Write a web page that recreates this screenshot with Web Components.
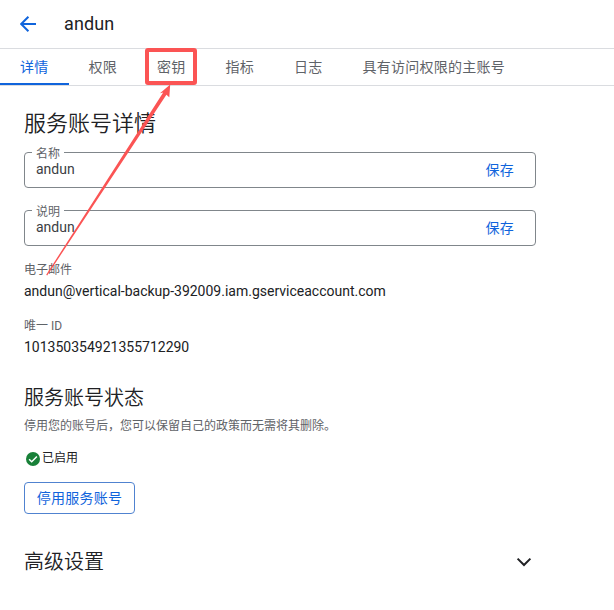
<!DOCTYPE html>
<html lang="zh-CN">
<head>
<meta charset="utf-8">
<title>andun</title>
<style>
html,body{margin:0;background:#fff}
body{width:614px;height:610px;overflow:hidden;position:relative;font-family:Roboto,"Noto Sans CJK SC",sans-serif;color:#202124;--blue:#1064dc}
</style>
</head>
<body>
<account-page></account-page>
<script>
const define = (name, html) => customElements.define(name, class extends HTMLElement {
  constructor() {
    super();
    const t = document.createElement('template');
    t.innerHTML = html;
    this.attachShadow({mode: 'open'}).append(t.content.cloneNode(true));
  }
});

define('page-header', `<style>
:host{display:flex;align-items:center;height:48px;padding-left:20px;gap:28px;border-bottom:1px solid #dadce0;font-size:18px;line-height:24px;letter-spacing:.1px}
svg{width:16px;height:16px;display:block}
</style><svg viewBox="0 0 16 16" fill="none" stroke="#1064dc" stroke-width="2"><path d="M16 8H1.5M8.4 .8L1.2 8l7.2 7.2"/></svg><slot></slot>`);

define('nav-tabs', `<style>
:host{display:flex;height:36px;border-bottom:1px solid #dadce0}
</style><slot></slot>`);

define('nav-tab', `<style>
:host{display:block;box-sizing:border-box;height:36px;padding:0 20px;font-size:14px;line-height:36px;letter-spacing:.25px;color:#5f6368;white-space:nowrap}
:host([active]){color:var(--blue);box-shadow:inset 0 -2px var(--blue)}
</style><slot></slot>`);

define('text-field', `<style>
:host{display:block;width:512px;height:36px}
fieldset{margin:0;min-width:0;box-sizing:border-box;height:43px;margin-top:-7px;padding:0 21px 0 11px;border:1px solid #80868b;border-radius:4px;display:block}
legend{margin-left:-4px;padding:0 4px;height:15px;font-size:12px;line-height:18px;color:#5f6368}
div{display:flex;justify-content:space-between;height:20px;font-size:14px;line-height:20px;margin-top:-1px;color:#3c4043}
b{font-weight:400;color:var(--blue);letter-spacing:.25px;position:relative;top:1px}
</style><fieldset><legend><slot name="label"></slot></legend><div><span><slot></slot></span><b>保存</b></div></fieldset>`);

define('info-row', `<style>
:host{display:block}
p{margin:0;font-size:12px;line-height:18px;height:20px;color:#5f6368}
div{font-size:14px;line-height:20px}
</style><p><slot name="label"></slot></p><div><slot></slot></div>`);

define('status-line', `<style>
:host{display:flex;align-items:center;height:20px;padding-left:2px;gap:2px;font-size:12px;line-height:20px}
svg{width:14px;height:14px;display:block;margin-top:2px}
</style><svg viewBox="0 0 14 14"><circle cx="7" cy="7" r="7" fill="#188038"/><path d="M3.1 7.2l2.6 2.6 5.2-5.3" fill="none" stroke="#fff" stroke-width="1.5"/></svg><span><slot></slot></span>`);

define('outline-button', `<style>
:host{display:block}
button{font:inherit;font-size:14px;line-height:28px;letter-spacing:.25px;box-sizing:border-box;width:111px;height:32px;padding:0;border:1px solid #5083d0;border-radius:4px;background:#fff;color:var(--blue);display:block}
</style><button><slot></slot></button>`);

define('expand-row', `<style>
:host{display:flex;align-items:center;justify-content:space-between;width:508px;height:28px;font-size:20px;line-height:28px;font-weight:350}
svg{width:16px;height:10px;display:block}
</style><span><slot></slot></span><svg viewBox="0 0 16 10" fill="none" stroke="#202124" stroke-width="2"><path d="M1.6 1.6L8 8l6.4-6.4"/></svg>`);

define('annotation-mark', `<style>
:host{position:absolute;left:0;top:0;pointer-events:none}
svg{display:block}
</style><svg width="614" height="610" viewBox="0 0 614 610"><rect x="147" y="50" width="48" height="33" rx="1" fill="none" stroke="#fb5454" stroke-width="4"/><path fill="#fb5454" d="M46.2 274.8L163.2 92.6 160 93.2 170.2 84.5 169.3 97.2 166.4 94.7 47.2 275.4Z"/></svg>`);

define('account-page', `<style>
:host{display:block}
main{display:flex;flex-direction:column;padding:24px 24px 0}
h2,h3,p{margin:0;font-weight:350}
h2{font-size:22px;line-height:28px;height:28px}
h3{font-size:20px;line-height:28px;height:28px;margin-top:26px}
p{font-size:12px;line-height:20px;margin-top:4px;color:#5f6368;font-weight:400}
text-field{margin-top:14px}
text-field+text-field{margin-top:22px}
info-row{height:41px;margin-top:15px}
info-row+info-row{margin-top:15px}
status-line{margin-top:12px}
outline-button{margin-top:14px}
expand-row{margin-top:34px}
</style>
<page-header>andun</page-header>
<nav-tabs><nav-tab active>详情</nav-tab><nav-tab>权限</nav-tab><nav-tab>密钥</nav-tab><nav-tab>指标</nav-tab><nav-tab>日志</nav-tab><nav-tab>具有访问权限的主账号</nav-tab></nav-tabs>
<main>
<h2>服务账号详情</h2>
<text-field><span slot="label">名称</span>andun</text-field>
<text-field><span slot="label">说明</span>andun</text-field>
<info-row><span slot="label">电子邮件</span>andun@vertical-backup-392009.iam.gserviceaccount.com</info-row>
<info-row><span slot="label">唯一 ID</span>101350354921355712290</info-row>
<h3>服务账号状态</h3>
<p>停用您的账号后，您可以保留自己的政策而无需将其删除。</p>
<status-line>已启用</status-line>
<outline-button>停用服务账号</outline-button>
<expand-row>高级设置</expand-row>
</main>
<annotation-mark></annotation-mark>`);
</script>
</body>
</html>
